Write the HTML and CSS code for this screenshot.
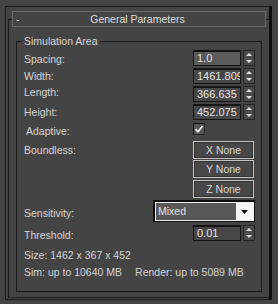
FILE: index.html
```html
<!DOCTYPE html>
<html>
<head>
<meta charset="utf-8">
<title>General Parameters</title>
<link rel="stylesheet" href="styles.css">
</head>
<body>
<div class="outer">
  <div class="header">
    <span class="collapse">-</span>
    <span class="title">General Parameters</span>
  </div>
  <div class="rollout">
    <fieldset class="group">
      <legend>Simulation Area</legend>

      <div class="row row-spin">
        <span class="label lab-spacing">Spacing:</span>
        <div class="spinner">
          <span class="field field-active">1.0</span>
          <span class="arrows"><svg width="10" height="14" viewBox="0 0 10 14"><polygon points="2,5 5,2 8,5" fill="#e2e2e2"/><polygon points="2,9 8,9 5,12" fill="#e2e2e2"/></svg></span>
        </div>
      </div>

      <div class="row row-spin">
        <span class="label lab-width">Width:</span>
        <div class="spinner">
          <span class="field">1461.809</span>
          <span class="arrows"><svg width="10" height="14" viewBox="0 0 10 14"><polygon points="2,5 5,2 8,5" fill="#e2e2e2"/><polygon points="2,9 8,9 5,12" fill="#e2e2e2"/></svg></span>
        </div>
      </div>

      <div class="row row-spin">
        <span class="label lab-length">Length:</span>
        <div class="spinner">
          <span class="field">366.635</span>
          <span class="arrows"><svg width="10" height="14" viewBox="0 0 10 14"><polygon points="2,5 5,2 8,5" fill="#e2e2e2"/><polygon points="2,9 8,9 5,12" fill="#e2e2e2"/></svg></span>
        </div>
      </div>

      <div class="row row-spin">
        <span class="label lab-height">Height:</span>
        <div class="spinner">
          <span class="field">452.075</span>
          <span class="arrows"><svg width="10" height="14" viewBox="0 0 10 14"><polygon points="2,5 5,2 8,5" fill="#e2e2e2"/><polygon points="2,9 8,9 5,12" fill="#e2e2e2"/></svg></span>
        </div>
      </div>

      <div class="row row-check">
        <span class="label lab-adaptive">Adaptive:</span>
        <div class="check-cell">
          <span class="checkbox"><svg width="10" height="10" viewBox="0 0 10 10"><path d="M1.5 5.2 L4 7.8 L8.6 2" fill="none" stroke="#f2f2f2" stroke-width="1.7"/></svg></span>
        </div>
      </div>

      <div class="row row-buttons">
        <span class="label lab-boundless">Boundless:</span>
        <div class="btns">
          <span class="btn">X None</span>
          <span class="btn">Y None</span>
          <span class="btn">Z None</span>
        </div>
      </div>

      <div class="row row-drop">
        <span class="label lab-sensitivity">Sensitivity:</span>
        <div class="dropdown">
          <div class="drop-inner">
            <span class="drop-value">Mixed</span>
            <span class="drop-caret"><svg width="9" height="6" viewBox="0 0 9 6"><polygon points="1,1 8,1 4.5,5" fill="#111"/></svg></span>
          </div>
        </div>
      </div>

      <div class="row row-threshold">
        <span class="label lab-threshold">Threshold:</span>
        <div class="spinner spinner-low">
          <span class="field">0.01</span>
          <span class="arrows"><svg width="10" height="14" viewBox="0 0 10 14"><polygon points="2,5 5,2 8,5" fill="#e2e2e2"/><polygon points="2,9 8,9 5,12" fill="#e2e2e2"/></svg></span>
        </div>
      </div>

      <div class="info info-size">Size: 1462 x 367 x 452</div>
      <div class="info info-mem"><span>Sim: up to 10640 MB</span><span class="render">Render: up to 5089 MB</span></div>
    </fieldset>
  </div>
</div>
</body>
</html>
```

FILE: styles.css
```css
* {
  box-sizing: border-box;
}

html,
body {
  margin: 0;
  background: #444444;
}

body {
  width: 278px;
  height: 304px;
  overflow: hidden;
  font-family: "Liberation Sans", Arial, sans-serif;
  font-size: 10.5px;
  line-height: 13px;
  color: #d4d4d4;
}

.outer {
  margin: 6px 0 0 5px;
  width: 267px;
  height: 294px;
  border-top: 1px solid #1b1b1b;
  border-left: 1px solid #1b1b1b;
  border-bottom: 1px solid #1b1b1b;
  border-right: 3px solid #0c0c0c;
  padding: 4px 0 0 2px;
  display: flex;
  flex-direction: column;
}

.header {
  position: relative;
  z-index: 1;
  width: 254px;
  height: 16px;
  margin-left: 4px;
  border: 1px solid #6b6b6b;
  background: #444444;
  display: flex;
  align-items: center;
  padding: 0 3px;
  color: #dedede;
}

.collapse {
  width: 5px;
}

.title {
  flex: 1;
  text-align: center;
  margin-right: 8px;
}

.rollout {
  flex: 1;
  margin-top: -8px;
  margin-bottom: 1px;
  border-top: 1px solid #1b1b1b;
  border-left: 1px solid #1b1b1b;
  border-bottom: 1px solid #1b1b1b;
  padding: 15px 7px 0 7px;
}

.group {
  margin: 0;
  min-width: 0;
  border: 1px solid #1b1b1b;
  padding: 0 6px 11px 7px;
}

.group legend {
  padding: 0 2px;
  margin-left: -2px;
  line-height: 13px;
}

.row {
  display: flex;
  justify-content: space-between;
  align-items: flex-start;
}

.row-spin,
.row-check {
  height: 18px;
}

.row-buttons {
  height: 61px;
}

.row-drop {
  height: 23px;
}

.row-threshold {
  height: 20px;
}

.lab-spacing { padding-top: 5px; }
.lab-width { padding-top: 4px; }
.lab-length { padding-top: 2px; }
.lab-height { padding-top: 4px; }
.lab-adaptive { padding-top: 5px; padding-left: 2px; }
.lab-boundless { padding-top: 6px; }
.lab-sensitivity { padding-top: 8px; }
.lab-threshold { padding-top: 7px; }

.spinner {
  display: flex;
  gap: 2px;
  margin-top: 2px;
}

.spinner-low {
  margin-top: 3px;
}

.field {
  width: 48px;
  height: 16px;
  border: 1px solid #141414;
  border-top-width: 2px;
  background: #474747;
  color: #e4e4e4;
  padding-left: 3px;
  white-space: nowrap;
  overflow: hidden;
  font-size: 11px;
  line-height: 13px;
}

.field-active {
  background: #5a5a5a;
}

.arrows {
  width: 12px;
  height: 16px;
  border: 1px solid #262626;
  background: #4a4a4a;
  display: flex;
  align-items: center;
  justify-content: center;
}

.arrows svg {
  display: block;
}

.check-cell {
  width: 62px;
  padding-top: 3px;
}

.checkbox {
  width: 12px;
  height: 12px;
  border: 1px solid #262626;
  border-top-color: #151515;
  border-left-color: #151515;
  background: #555555;
  display: flex;
  align-items: center;
  justify-content: center;
}

.checkbox svg {
  display: block;
}

.btns {
  display: flex;
  flex-direction: column;
  gap: 1px;
  margin-top: 3px;
  margin-right: 1px;
}

.btn {
  width: 61px;
  height: 18px;
  border: 1px solid #c4c4c4;
  background: #474747;
  box-shadow: inset 0 0 0 1px #333333;
  text-align: center;
  line-height: 16px;
  color: #d8d8d8;
}

.btn:last-child {
  margin-top: 1px;
}

.dropdown {
  width: 102px;
  height: 22px;
  margin-top: 1px;
  border: 1px solid #0e0e0e;
  border-top-width: 2px;
  border-left-width: 2px;
  display: flex;
}

.drop-inner {
  flex: 1;
  display: flex;
  border: 1px solid #ededed;
}

.drop-value {
  flex: 1;
  background: #585858;
  color: #e0e0e0;
  padding-left: 2px;
  line-height: 17px;
}

.drop-caret {
  width: 17px;
  background: #f4f4f4;
  display: flex;
  align-items: center;
  justify-content: center;
}

.drop-caret svg {
  display: block;
}

.info {
  white-space: nowrap;
}

.info-size {
  height: 20px;
  padding-top: 7px;
}

.info-mem {
  height: 18px;
  padding-top: 4px;
  display: flex;
}

.render {
  margin-left: 13px;
}
```
